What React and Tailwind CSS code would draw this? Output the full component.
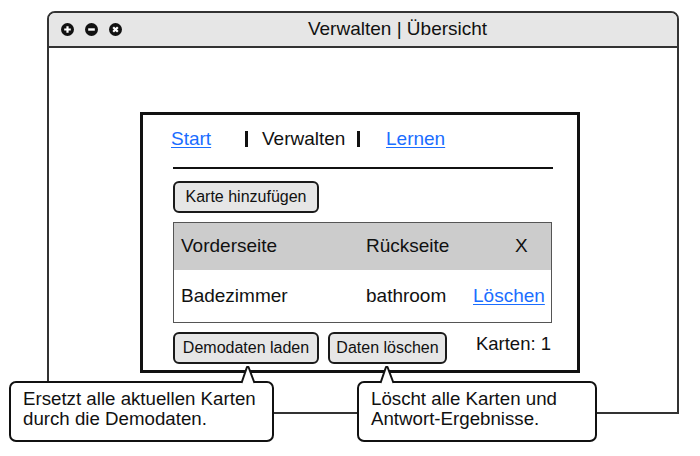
import React from "react";

function WinIcon({ kind }) {
  return (
    <svg width="13" height="13" viewBox="0 0 13 13">
      <circle cx="6.5" cy="6.5" r="6.5" fill="#111" />
      {kind === "plus" && (
        <path d="M6.5 3.2V9.8M3.2 6.5H9.8" stroke="#fff" strokeWidth="2.2" />
      )}
      {kind === "minus" && <path d="M3.2 6.5H9.8" stroke="#fff" strokeWidth="2.4" />}
      {kind === "x" && (
        <path d="M4.2 4.2L8.8 8.8M8.8 4.2L4.2 8.8" stroke="#fff" strokeWidth="2.2" />
      )}
    </svg>
  );
}

function Pointer({ left }) {
  return (
    <svg
      className="absolute"
      style={{ left: left - 9, top: -18 }}
      width="18"
      height="20"
      viewBox="0 0 18 20"
    >
      <path d="M2.5 19 L8 2 L9.5 2 L15.5 19 Z" fill="#fff" stroke="none" />
      <path d="M2.5 18 L8 2 L9.5 2 L15.5 18" fill="none" stroke="#111" strokeWidth="2" strokeLinejoin="round" />
    </svg>
  );
}

function Btn({ children, className = "" }) {
  return (
    <div
      className={
        "h-[32px] flex items-center justify-center rounded-[6px] border-2 border-[#1a1a1a] bg-[#e6e6e6] text-[16px] text-[#111] " +
        className
      }
    >
      {children}
    </div>
  );
}

export default function App() {
  return (
    <div className="relative w-[700px] h-[456px] overflow-hidden bg-white font-['Liberation_Sans',Arial,sans-serif] text-[#111] pt-[11px] pl-[47px]">
      {/* window */}
      <div className="w-[632px] h-[403px] border-2 border-[#333] rounded-t-[8px] flex flex-col">
        <div className="h-[35px] shrink-0 bg-[#e6e6e6] border-b-2 border-[#333] rounded-t-[6px] flex items-center">
          <div className="flex items-center gap-[11px] pl-[12px]">
            <WinIcon kind="plus" />
            <WinIcon kind="minus" />
            <WinIcon kind="x" />
          </div>
          <div className="flex-1 flex items-center justify-center pr-[4px] text-[19px] text-[#111]">
            Verwalten | Übersicht
          </div>
        </div>
        <div className="flex-1 pt-[64px] pl-[91px]">
          {/* inner panel */}
          <div className="w-[440px] h-[261px] border-[3px] border-[#111] flex flex-col">
            <div className="h-[22px] mt-[13px] pl-[28px] flex items-center text-[19px]">
              <span className="w-[74px] text-[#1a6dff] underline underline-offset-[2px]">Start</span>
              <span className="w-[3px] h-[16px] bg-[#111]" />
              <span className="w-[109px] pl-[14px]">Verwalten</span>
              <span className="w-[3px] h-[16px] bg-[#111]" />
              <span className="pl-[26px] text-[#1a6dff] underline underline-offset-[2px]">Lernen</span>
            </div>
            <div className="pl-[30px] flex flex-col">
              <div className="mt-[17px] w-[380px] h-[2px] bg-[#111]" />
              <div className="mt-[12px] flex">
                <Btn className="w-[146px]">Karte hinzufügen</Btn>
              </div>
              <div className="mt-[9px] w-[379px] h-[101px] border-[1.5px] border-[#555] flex flex-col text-[19px]">
                <div className="h-[47px] bg-[#cccccc] flex items-center pl-[7px]">
                  <span className="w-[185px]">Vorderseite</span>
                  <span className="w-[149px]">Rückseite</span>
                  <span>X</span>
                </div>
                <div className="flex-1 flex items-center pl-[7px] bg-white">
                  <span className="w-[185px]">Badezimmer</span>
                  <span className="w-[107px]">bathroom</span>
                  <span className="text-[#1a6dff] underline underline-offset-[2px]">Löschen</span>
                </div>
              </div>
              <div className="mt-[9px] w-[379px] flex items-start">
                <Btn className="w-[146px]">Demodaten laden</Btn>
                <Btn className="w-[119px] ml-[9px]">Daten löschen</Btn>
                <div className="ml-auto pr-[1px] h-[24px] flex items-center text-[18.5px]">Karten: 1</div>
              </div>
            </div>
          </div>
        </div>
      </div>

      {/* callouts */}
      <div className="absolute left-[9px] top-[381px] w-[265px] h-[61px] bg-white border-2 border-[#111] rounded-[7px] pt-[6px] pl-[12px] text-[18.7px] leading-[20px]">
        <Pointer left={237} />
        <div>Ersetzt alle aktuellen Karten</div>
        <div>durch die Demodaten.</div>
      </div>
      <div className="absolute left-[357px] top-[381px] w-[240px] h-[61px] bg-white border-2 border-[#111] rounded-[7px] pt-[6px] pl-[12px] text-[18.7px] leading-[20px]">
        <Pointer left={28} />
        <div>Löscht alle Karten und</div>
        <div>Antwort-Ergebnisse.</div>
      </div>
    </div>
  );
}
